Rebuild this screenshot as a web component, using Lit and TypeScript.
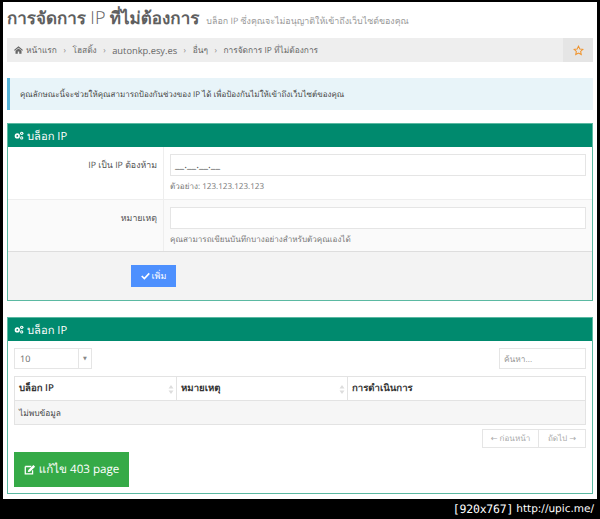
import { LitElement, html, css, svg } from "lit";
import { customElement } from "lit/decorators.js";

const cogs = svg`<svg class="ic" viewBox="0 0 14 12" width="10" height="9"><g fill="currentColor"><circle cx="4.6" cy="6.6" r="3.6"/><circle cx="10.8" cy="3" r="2.4"/><circle cx="10.8" cy="9.4" r="2.2"/></g><g fill="#008a6e"><circle cx="4.6" cy="6.6" r="1.3"/><circle cx="10.8" cy="3" r=".8"/><circle cx="10.8" cy="9.4" r=".8"/></g></svg>`;

@customElement("app-root")
export class AppRoot extends LitElement {
  static styles = css`
    :host { display: block; width: 600px; height: 519px; background: #000; overflow: hidden; text-rendering: geometricPrecision;
      font-family: "Open Sans", "Noto Sans", "DejaVu Sans", sans-serif; font-size: 9px; color: #555; }
    .page { box-sizing: border-box; height: 497px; margin: 2px 3px 0 3px; background: #fff; padding: 3px 4px 0 4px; }
    .title { height: 33px; display: flex; align-items: baseline; gap: 7px; white-space: nowrap; line-height: 26px; }
    .title b { font-size: 17px; font-weight: 600; color: #5f5f5f; }
    .title span.t { font-weight: 300; font-size: 18px; }
    .title small { font-size: 8.9px; color: #999; }
    .crumb { height: 24px; background: #eee; display: flex; align-items: center; padding-left: 7px; color: #666; font-size: 8.4px; white-space: nowrap; }
    .crumb .lat { font-size: 9.3px; }
    .crumb .sep { margin: 0 6.5px; color: #888; }
    .crumb .star { margin-left: auto; width: 30px; align-self: stretch; background: #e5e5e5; display: flex; align-items: center; justify-content: center; }
    .alert { margin-top: 16px; height: 32px; box-sizing: border-box; background: #e8f4f9; border-left: 3px solid #56b4d9; display: flex; align-items: center; padding-left: 10px; color: #444; font-size: 8px; white-space: nowrap; }
    .panel { border: 1px solid #5bb9a2; }
    .p1 { margin-top: 13px; height: 178px; box-sizing: border-box; display: flex; flex-direction: column; }
    .p2 { margin-top: 16px; height: 177px; box-sizing: border-box; }
    .head { height: 23px; background: #008a6e; color: #fff; display: flex; align-items: center; gap: 3px; padding-left: 6px; font-size: 11.2px; flex: none; }
    .ic { flex: none; }
    .row { display: flex; border-bottom: 1px solid #eee; height: 53px; box-sizing: border-box; flex: none; }
    .row.alt { height: 52px; background: #fafafa; border-bottom-color: #ddd; }
    .lab { width: 156px; box-sizing: border-box; border-right: 1px solid #eee; text-align: right; padding: 11px 6px 0 0; font-size: 8.8px; color: #555; line-height: 14px; }
    .fld { flex: 1; padding: 7px 6px 0 6px; min-width: 0; }
    .inp { box-sizing: border-box; height: 22px; background: #fff; border: 1px solid #e5e5e5; padding: 3px 4px; color: #555; font-size: 10.5px; line-height: 15px; }
    .help { margin-top: 5px; font-size: 8.1px; color: #777; line-height: 12px; white-space: nowrap; }
    .foot { flex: 1; background: #f3f3f3; padding: 13px 0 0 123px; }
    .add { box-sizing: border-box; width: 45px; height: 22px; background: #4d90fe; color: #fff; display: flex; align-items: center; justify-content: center; gap: 2px; font-size: 9px; }
    .body { padding: 7px 6px 0 6px; }
    .tools { display: flex; justify-content: space-between; }
    .sel { box-sizing: border-box; width: 78px; height: 21px; border: 1px solid #e5e5e5; display: flex; align-items: center; padding-left: 5px; font-size: 9px; color: #666; }
    .sel i { margin-left: auto; width: 12px; align-self: stretch; border-left: 1px solid #e5e5e5; display: flex; align-items: center; justify-content: center; font-style: normal; font-size: 5px; color: #888; }
    .search { box-sizing: border-box; width: 87px; height: 21px; border: 1px solid #e5e5e5; padding-left: 4px; display: flex; align-items: center; color: #999; font-size: 8.4px; }
    table { margin-top: 7px; width: 100%; border-collapse: collapse; table-layout: fixed; border: 1px solid #e3e3e3; }
    th { height: 24px; box-sizing: border-box; padding: 0 4px; text-align: left; font-size: 9.6px; font-weight: 600; color: #333; border-right: 1px solid #e3e3e3; border-bottom: 1px solid #e3e3e3; position: relative; }
    th .sort { position: absolute; right: 2px; top: 8px; width: 6px; height: 9px; }
    td { height: 24px; box-sizing: border-box; padding: 0 4px; background: #f6f6f6; font-size: 8.4px; color: #444; }
    .pager { margin-top: 4px; display: flex; justify-content: flex-end; }
    .pager span { box-sizing: border-box; height: 19px; border: 1px solid #e5e5e5; color: #aaa; font-size: 8.1px; display: flex; align-items: center; justify-content: center; }
    .pager .prev { width: 57px; } .pager .next { width: 47px; border-left: 0; }
    .edit { margin-top: 4px; box-sizing: border-box; width: 115px; height: 35px; background: #35aa47; color: #fff; font-size: 11.6px; font-weight: 500; display: flex; align-items: center; justify-content: center; gap: 3px; }
    .mark { height: 20px; display: flex; align-items: center; justify-content: flex-end; gap: 3px; padding-right: 6px; color: #fff; font-family: "DejaVu Sans Mono", monospace; font-size: 11.5px; letter-spacing: -.2px; white-space: pre; }
    .mark span { font-family: "DejaVu Sans", sans-serif; font-size: 10.5px; letter-spacing: 0; }
  `;
  private sort() {
    return svg`<svg class="sort" viewBox="0 0 6 9"><path d="M3 0l2.5 3.5h-5zM3 9L.5 5.5h5z" fill="#ddd"/></svg>`;
  }
  render() {
    return html`
      <div class="page">
        <div class="title"><b>การจัดการ <span class="t">IP</span> ที่ไม่ต้องการ</b><small>บล็อก IP ซึ่งคุณจะไม่อนุญาติให้เข้าถึงเว็บไซต์ของคุณ</small></div>
        <div class="crumb">
          <svg viewBox="0 0 12 10" width="9" height="8" style="margin-right:3px"><path d="M6 0l6 5-1 1-5-4-5 4-1-1zM2 6l4-3 4 3v4H7V7H5v3H2z" fill="#666"/></svg>
          หน้าแรก<span class="sep">›</span>โฮสติ้ง<span class="sep">›</span><span class="lat">autonkp.esy.es</span><span class="sep">›</span>อื่นๆ<span class="sep">›</span>การจัดการ IP ที่ไม่ต้องการ
          <span class="star"><svg viewBox="0 0 24 24" width="11" height="11"><path d="M12 2.5l2.9 6.2 6.8.8-5 4.6 1.3 6.7-6-3.4-6 3.4 1.3-6.7-5-4.6 6.8-.8z" fill="none" stroke="#f0932b" stroke-width="2.2"/></svg></span>
        </div>
        <div class="alert">คุณลักษณะนี้จะช่วยให้คุณสามารถป้องกันช่วงของ IP ได้ เพื่อป้องกันไม่ให้เข้าถึงเว็บไซต์ของคุณ</div>
        <div class="panel p1">
          <div class="head">${cogs}บล็อก IP</div>
          <div class="row">
            <div class="lab">IP เป็น IP ต้องห้าม</div>
            <div class="fld"><div class="inp">__.__.__.__</div><div class="help">ตัวอย่าง: 123.123.123.123</div></div>
          </div>
          <div class="row alt">
            <div class="lab">หมายเหตุ</div>
            <div class="fld"><div class="inp"></div><div class="help">คุณสามารถเขียนบันทึกบางอย่างสำหรับตัวคุณเองได้</div></div>
          </div>
          <div class="foot"><div class="add"><svg viewBox="0 0 12 10" width="9" height="8"><path d="M1 5l3.5 3.5L11 1.5" fill="none" stroke="#fff" stroke-width="2.2"/></svg>เพิ่ม</div></div>
        </div>
        <div class="panel p2">
          <div class="head">${cogs}บล็อก IP</div>
          <div class="body">
            <div class="tools">
              <div class="sel">10<i>▼</i></div>
              <div class="search">ค้นหา...</div>
            </div>
            <table>
              <colgroup><col style="width:162px"/><col style="width:171px"/><col/></colgroup>
              <tr><th>บล็อก IP${this.sort()}</th><th>หมายเหตุ${this.sort()}</th><th>การดำเนินการ</th></tr>
              <tr><td colspan="3">ไม่พบข้อมูล</td></tr>
            </table>
            <div class="pager"><span class="prev">← ก่อนหน้า</span><span class="next">ถัดไป →</span></div>
            <div class="edit"><svg viewBox="0 0 14 12" width="12" height="11"><path d="M1.5 2.5h7M1.5 2.5v8.5h8.5V7" fill="none" stroke="#fff" stroke-width="1.5"/><path d="M5 6.5L11 .8l2 2-6 5.7-2.5.5z" fill="#fff"/></svg>แก้ไข 403 page</div>
          </div>
        </div>
      </div>
      <div class="mark">[920x767]<span>http://upic.me/</span></div>
    `;
  }
}
